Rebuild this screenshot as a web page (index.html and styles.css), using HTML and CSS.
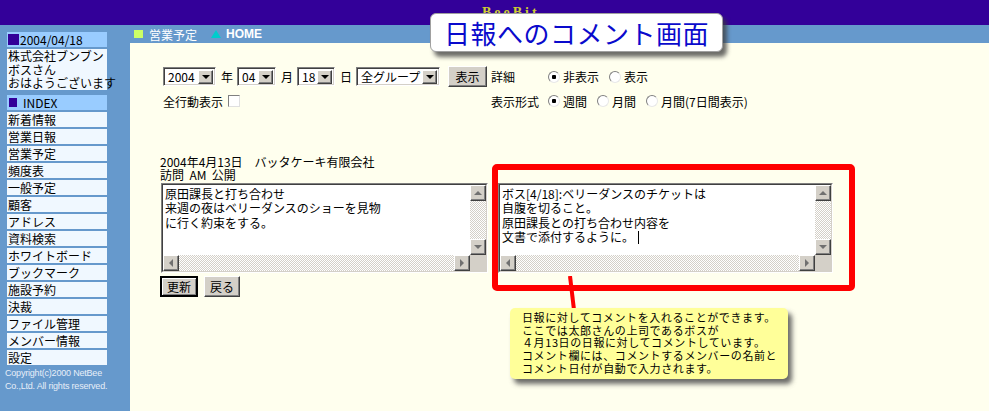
FILE: index.html
```html
<!DOCTYPE html>
<html lang="ja">
<head>
    <meta charset="UTF-8">
    <title>日報へのコメント画面</title>
    <link rel="stylesheet" href="styles.css">
</head>
<body>
    <div class="topbar"><span class="logo">BeeBit</span></div>

    <div class="layout">
        <aside class="sidebar">
            <div class="side-head"><span class="sq"></span>2004/04/18</div>
            <div class="greeting">
                <div>株式会社ブンブン</div>
                <div>ボスさん</div>
                <div>おはようございます</div>
            </div>
            <div class="side-head index"><span class="sq small"></span>INDEX</div>
            <ul class="menu">
                <li>新着情報</li>
                <li>営業日報</li>
                <li>営業予定</li>
                <li>頻度表</li>
                <li>一般予定</li>
                <li>顧客</li>
                <li>アドレス</li>
                <li>資料検索</li>
                <li>ホワイトボード</li>
                <li>ブックマーク</li>
                <li>施設予約</li>
                <li>決裁</li>
                <li>ファイル管理</li>
                <li>メンバー情報</li>
                <li>設定</li>
            </ul>
            <div class="copyright">Copyright(c)2000 NetBee<br>Co.,Ltd. All rights reserved.</div>
        </aside>

        <main class="main">
            <div class="crumb">
                <span class="mark-green"></span><span class="crumb-text">営業予定</span>
                <span class="mark-tri"></span><span class="crumb-home">HOME</span>
            </div>

            <div class="panel">
                <div class="filter">
                    <div class="filter-row">
                        <div class="filter-main">
                            <span class="sel w53"><span class="sel-val">2004</span><span class="sel-btn"></span></span>
                            <span class="unit">年</span>
                            <span class="sel w39"><span class="sel-val">04</span><span class="sel-btn"></span></span>
                            <span class="unit">月</span>
                            <span class="sel w38"><span class="sel-val">18</span><span class="sel-btn"></span></span>
                            <span class="unit">日</span>
                            <span class="sel w84"><span class="sel-val">全グループ</span><span class="sel-btn"></span></span>
                            <span class="btn show">表示</span>
                        </div>
                        <div class="filter-label">詳細</div>
                        <div class="radios">
                            <span class="radio on"></span><span class="radio-text">非表示</span>
                            <span class="radio"></span><span class="radio-text">表示</span>
                        </div>
                    </div>
                    <div class="filter-row second">
                        <div class="filter-main">
                            <span>全行動表示</span><span class="check"></span>
                        </div>
                        <div class="filter-label">表示形式</div>
                        <div class="radios">
                            <span class="radio on"></span><span class="radio-text">週間</span>
                            <span class="radio"></span><span class="radio-text">月間</span>
                            <span class="radio"></span><span class="radio-text">月間(7日間表示)</span>
                        </div>
                    </div>
                </div>

                <div class="report-info">
                    <div>2004年4月13日　バッタケーキ有限会社</div>
                    <div>訪問&nbsp;&nbsp;AM&nbsp;&nbsp;公開</div>
                </div>

                <div class="editors">
                    <div class="ta left">
                        <div class="ta-inner">
                            <div class="ta-body">
                                <div class="ta-text">
                                    <div>原田課長と打ち合わせ</div>
                                    <div>来週の夜はベリーダンスのショーを見物</div>
                                    <div>に行く約束をする。</div>
                                </div>
                                <div class="vbar">
                                    <span class="sbtn"><span class="arr up"></span></span>
                                    <span class="track"></span>
                                    <span class="sbtn"><span class="arr down"></span></span>
                                </div>
                            </div>
                            <div class="hbar">
                                <span class="sbtn"><span class="arr lt"></span></span>
                                <span class="track"></span>
                                <span class="sbtn"><span class="arr rt"></span></span>
                                <span class="corner"></span>
                            </div>
                        </div>
                    </div>

                    <div class="ta right highlight">
                        <div class="ta-inner">
                            <div class="ta-body">
                                <div class="ta-text">
                                    <div>ボス[4/18]:ベリーダンスのチケットは</div>
                                    <div>自腹を切ること。</div>
                                    <div>原田課長との打ち合わせ内容を</div>
                                    <div>文書で添付するように。<span class="caret"></span></div>
                                </div>
                                <div class="vbar">
                                    <span class="sbtn"><span class="arr up"></span></span>
                                    <span class="track"></span>
                                    <span class="sbtn"><span class="arr down"></span></span>
                                </div>
                            </div>
                            <div class="hbar">
                                <span class="sbtn"><span class="arr lt"></span></span>
                                <span class="track"></span>
                                <span class="sbtn"><span class="arr rt"></span></span>
                                <span class="corner"></span>
                            </div>
                        </div>
                    </div>
                </div>

                <div class="actions">
                    <span class="btn default">更新</span>
                    <span class="btn">戻る</span>
                </div>
            </div>
        </main>
    </div>

    <!-- annotations laid over the screen -->
    <div class="callout">日報へのコメント画面</div>
    <svg class="pointer" width="20" height="40" viewBox="0 0 20 40">
        <line x1="4" y1="0" x2="8" y2="34" stroke="#ff0000" stroke-width="4"/>
    </svg>
    <div class="note">
        <div>日報に対してコメントを入れることができます。</div>
        <div>ここでは太郎さんの上司であるボスが</div>
        <div>４月13日の日報に対してコメントしています。</div>
        <div>コメント欄には、コメントするメンバーの名前と</div>
        <div>コメント日付が自動で入力されます。</div>
    </div>
</body>
</html>
```

FILE: styles.css
```css
* {
    margin: 0;
    padding: 0;
    box-sizing: border-box;
}

body {
    width: 989px;
    height: 411px;
    overflow: hidden;
    position: relative;
    background: #6699cc;
    color: #000;
    font-family: "Noto Sans CJK JP", sans-serif;
    font-size: 12px;
    line-height: 15px;
}

.topbar {
    height: 25px;
    background: #330099;
    padding: 4px 0 0 482px;
    overflow: hidden;
}

.logo {
    font-family: "Liberation Serif", serif;
    font-weight: bold;
    font-size: 14px;
    letter-spacing: 3px;
    color: #cccc33;
}

.layout {
    display: flex;
    height: 386px;
}

/* sidebar */
.sidebar {
    width: 130px;
    padding: 7px 0 0 7px;
}

.side-head {
    width: 100px;
    height: 15px;
    background: #99ccff;
    display: flex;
    align-items: center;
    margin-bottom: 2px;
}

.sq {
    display: inline-block;
    width: 11px;
    height: 11px;
    background: #330099;
    margin: 0 1px;
}

.sq.small {
    width: 8px;
    height: 9px;
    margin: 0 6px 0 2px;
}

.greeting {
    width: 100px;
    height: 41px;
    background: #f0f8ff;
    padding: 0 0 0 1px;
    line-height: 13.6px;
    white-space: nowrap;
    margin-bottom: 5px;
}

.menu {
    list-style: none;
}

.menu li {
    width: 100px;
    height: 15px;
    background: #f0f8ff;
    padding-left: 1px;
    margin-bottom: 2px;
    white-space: nowrap;
}

.copyright {
    margin: 1px 0 0 -2px;
    font-family: "Liberation Sans", sans-serif;
    font-size: 9px;
    letter-spacing: -0.2px;
    line-height: 13px;
    color: #e6eef8;
    white-space: nowrap;
}

/* main */
.main {
    flex: 1;
}

.crumb {
    height: 18px;
    display: flex;
    align-items: center;
    color: #fff;
}

.mark-green {
    width: 9px;
    height: 8px;
    background: #ccff66;
    margin: 0 6px 0 4px;
}

.crumb-text {
    margin-right: 14px;
}

.mark-tri {
    width: 0;
    height: 0;
    border-left: 5px solid transparent;
    border-right: 5px solid transparent;
    border-bottom: 8px solid #00cccc;
    margin-right: 5px;
}

.crumb-home {
    font-family: "Liberation Sans", sans-serif;
    font-weight: bold;
    font-size: 12px;
}

.panel {
    height: 368px;
    background: #ffffee;
    padding: 23px 0 0 30px;
}

/* filter form */
.filter {
    margin-left: 3px;
}

.filter-row {
    display: flex;
    align-items: center;
    height: 21px;
}

.filter-row.second {
    height: 22px;
    margin-top: 3px;
}

.filter-main {
    width: 328px;
    display: flex;
    align-items: center;
}

.filter-label {
    width: 57px;
}

.radios {
    display: flex;
    align-items: center;
}

.sel {
    display: inline-flex;
    align-items: center;
    height: 19px;
    background: #fff;
    border: 1px solid;
    border-color: #808080 #fff #fff #808080;
    box-shadow: inset 1px 1px #404040, inset -1px -1px #d4d0c8;
    padding: 2px;
    margin-right: 5px;
}

.sel-val {
    flex: 1;
    padding-left: 2px;
    line-height: 13px;
    white-space: nowrap;
}

.sel-btn {
    width: 15px;
    height: 14px;
    background: #d4d0c8;
    border: 1px solid;
    border-color: #fff #404040 #404040 #fff;
    box-shadow: inset -1px -1px #808080;
    display: flex;
    align-items: center;
    justify-content: center;
}

.sel-btn::after {
    content: "";
    border-left: 4px solid transparent;
    border-right: 4px solid transparent;
    border-top: 4px solid #000;
}

.w53 { width: 53px; }
.w39 { width: 39px; }
.w38 { width: 38px; }
.w84 { width: 84px; }

.unit {
    margin-right: 4px;
}

.btn {
    display: inline-flex;
    align-items: center;
    justify-content: center;
    height: 21px;
    background: #d4d0c8;
    border: 1px solid;
    border-color: #fff #404040 #404040 #fff;
    box-shadow: inset -1px -1px #808080;
    white-space: nowrap;
}

.btn.show {
    width: 39px;
    margin-left: 3px;
}

.radio {
    width: 12px;
    height: 12px;
    border-radius: 50%;
    background: #fff;
    border: 1px solid;
    border-color: #808080 #e8e8e8 #e8e8e8 #808080;
    margin-right: 3px;
}

.radio.on {
    background: radial-gradient(circle, #000 0 2px, #fff 2.5px);
}

.radio-text {
    margin-right: 10px;
}

.check {
    width: 12px;
    height: 12px;
    background: #fff;
    border: 1px solid;
    border-color: #808080 #e0e0e0 #e0e0e0 #808080;
    margin-left: 5px;
}

/* report */
.report-info {
    margin-top: 43px;
    line-height: 13px;
    height: 26px;
}

.editors {
    display: flex;
    margin-top: 2px;
}

.ta {
    height: 90px;
    border: 1px solid;
    border-color: #808080 #fff #fff #808080;
    background: #fff;
}

.ta.left {
    width: 327px;
    margin-left: 1px;
}

.ta.right {
    width: 335px;
    margin-left: 10px;
}

.ta-inner {
    height: 100%;
    border: 1px solid;
    border-color: #404040 #d4d0c8 #d4d0c8 #404040;
    display: flex;
    flex-direction: column;
}

.ta-body {
    flex: 1;
    display: flex;
    min-height: 0;
}

.ta-text {
    flex: 1;
    padding: 2px 2px 0 2px;
    line-height: 14.3px;
    white-space: nowrap;
    overflow: hidden;
}

.caret {
    display: inline-block;
    width: 1px;
    height: 13px;
    background: #000;
    margin-left: 4px;
    vertical-align: -2px;
}

.vbar {
    width: 16px;
    display: flex;
    flex-direction: column;
}

.hbar {
    height: 16px;
    display: flex;
}

.track {
    flex: 1;
    background: repeating-conic-gradient(#d4d0c8 0 25%, #fff 0 50%) 0 0 / 2px 2px;
}

.sbtn {
    width: 16px;
    height: 16px;
    flex: none;
    background: #d4d0c8;
    border: 1px solid;
    border-color: #fff #404040 #404040 #fff;
    box-shadow: inset -1px -1px #808080;
    display: flex;
    align-items: center;
    justify-content: center;
}

.arr {
    width: 0;
    height: 0;
}

.arr.up {
    border-left: 4px solid transparent;
    border-right: 4px solid transparent;
    border-bottom: 4px solid #707070;
}

.arr.down {
    border-left: 4px solid transparent;
    border-right: 4px solid transparent;
    border-top: 4px solid #707070;
}

.arr.lt {
    border-top: 4px solid transparent;
    border-bottom: 4px solid transparent;
    border-right: 4px solid #707070;
}

.arr.rt {
    border-top: 4px solid transparent;
    border-bottom: 4px solid transparent;
    border-left: 4px solid #707070;
}

.corner {
    width: 16px;
    background: #d4d0c8;
}

.highlight {
    position: relative;
}

.highlight::before {
    content: "";
    position: absolute;
    left: -7px;
    top: -20px;
    width: 351px;
    height: 115px;
    border: 6px solid #ff0000;
    border-radius: 5px;
}

.actions {
    display: flex;
    gap: 6px;
    margin-top: 3px;
}

.actions .btn {
    width: 36px;
}

.btn.default {
    width: 38px;
    border-width: 2px;
    border-color: #000;
    box-shadow: inset 1px 1px #fff, inset -1px -1px #808080;
}

/* annotations */
.callout {
    position: absolute;
    left: 430px;
    top: 13px;
    width: 293px;
    height: 39px;
    background: #fff;
    border: 1px solid #a0a0a0;
    border-radius: 6px;
    box-shadow: 4px 5px 4px rgba(60, 60, 60, 0.75);
    color: #0a0acc;
    font-size: 26px;
    font-weight: 400;
    letter-spacing: 0.5px;
    line-height: 37px;
    text-align: center;
}

.pointer {
    position: absolute;
    left: 566px;
    top: 276px;
}

.note {
    position: absolute;
    left: 510px;
    top: 308px;
    width: 278px;
    height: 71px;
    background: #ffff99;
    border-radius: 5px;
    box-shadow: 4px 5px 5px rgba(70, 70, 70, 0.8);
    padding: 3px 0 0 12px;
    font-size: 11px;
    letter-spacing: 0.6px;
    line-height: 12.7px;
    white-space: nowrap;
}
```
